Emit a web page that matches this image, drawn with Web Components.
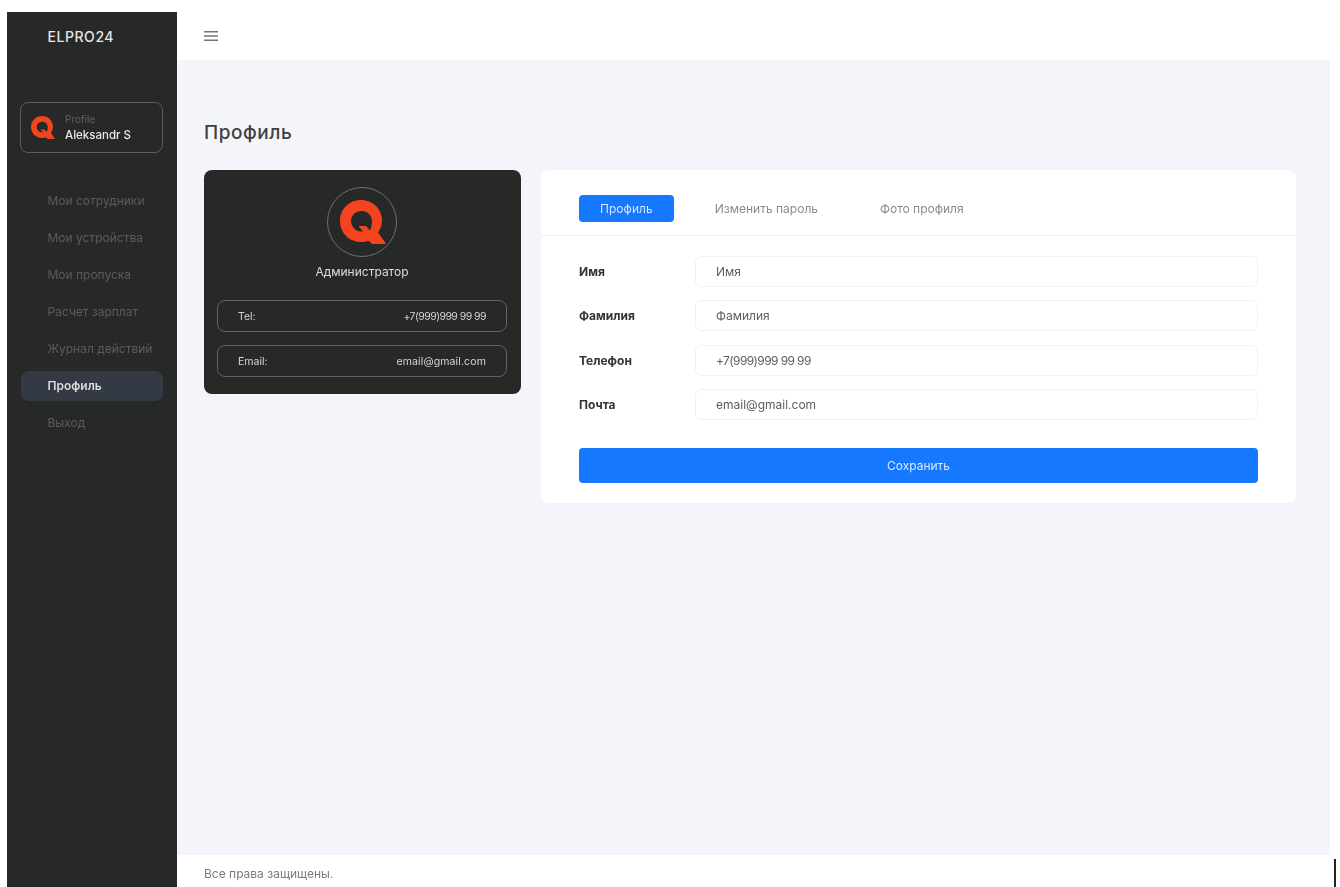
<!DOCTYPE html>
<html lang="ru"><head><meta charset="utf-8"><title>Профиль</title>
<style>
html,body{margin:0;padding:0;height:887px;overflow:hidden;background:#fff;font-family:Inter,"Noto Sans",sans-serif}
</style></head><body>
<app-shell>
  <side-bar slot="side" user-role="Profile" user-name="Aleksandr S">
    <nav-item>Мои сотрудники</nav-item>
    <nav-item>Мои устройства</nav-item>
    <nav-item>Мои пропуска</nav-item>
    <nav-item>Расчет зарплат</nav-item>
    <nav-item>Журнал действий</nav-item>
    <nav-item active>Профиль</nav-item>
    <nav-item>Выход</nav-item>
  </side-bar>
  <top-bar slot="top"></top-bar>
  <h-title>Профиль</h-title>
  <div style="display:flex;gap:20px;align-items:flex-start">
    <profile-card role-name="Администратор">
      <info-row label="Tel:"><span style="letter-spacing:-.55px">+7(999)999 99 99</span></info-row>
      <info-row label="Email:"><span style="letter-spacing:.13px">email@gmail.com</span></info-row>
    </profile-card>
    <form-card>
      <tab-item slot="tabs" active>Профиль</tab-item>
      <tab-item slot="tabs">Изменить пароль</tab-item>
      <tab-item slot="tabs">Фото профиля</tab-item>
      <form-row label="Имя">Имя</form-row>
      <form-row label="Фамилия">Фамилия</form-row>
      <form-row label="Телефон"><span style="letter-spacing:-.6px">+7(999)999 99 99</span></form-row>
      <form-row label="Почта">email@gmail.com</form-row>
    </form-card>
  </div>
  <app-footer slot="foot">Все права защищены.</app-footer>
</app-shell>
<script>
const Q=(w,h)=>`<svg width="${w}" height="${h}" viewBox="0 0 46 44" style="display:block"><path fill="#f4431f" fill-rule="evenodd" d="M21 0C33 0 42 9 42 20.5C42 25 40.5 29 38 32.5L45.5 43V44H32L29 41C26.5 41.5 24 42 21 42C9 42 0 32.5 0 21C0 9 9 0 21 0ZM21.5 11C15.5 11 11 15.5 11 21C11 26.5 15.5 31.5 21.5 31.5C22 31.5 22.5 31.5 23 31.5L18.5 26H26L30 30.5C31.2 28 32 24.5 32 21C32 15.5 27.5 11 21.5 11Z"/></svg>`;
function def(name,html){customElements.define(name,class extends HTMLElement{
  connectedCallback(){if(this.shadowRoot)return;const r=this.attachShadow({mode:'open'});r.innerHTML=typeof html==='function'?html(this):html;}
});}
def('app-shell',`<style>
:host{display:flex;height:887px;padding-top:12px;padding-left:7px;box-sizing:border-box;filter:blur(.35px)}
.side{flex:0 0 170px;display:flex}
.col{flex:0 0 1153px;display:flex;flex-direction:column;min-width:0}
main{flex:1;background:#f4f5fa;padding:60px 34px 0 27px}
.gut{flex:1;display:flex;flex-direction:column;justify-content:flex-end;padding-left:4px}
.bar{width:2px;height:28px;background:#222}
</style>
<div class="side"><slot name="side"></slot></div>
<div class="col"><slot name="top"></slot><main><slot></slot></main><slot name="foot"></slot></div>
<div class="gut"><div class="bar"></div></div>`);
def('side-bar',h=>`<style>
:host{display:flex;flex-direction:column;width:170px;background:#272929;color:#e8e8e8}
.brand{height:48px;display:flex;align-items:center;padding-left:40.5px;font-size:14px;font-weight:500;letter-spacing:.55px;color:#e6e6e6}
.prof{margin:42px 14px 0 13px;height:51px;box-sizing:border-box;border:1px solid #5c5e5e;border-radius:8px;display:flex;align-items:center;padding-left:10px;gap:10px}
.t{display:flex;flex-direction:column;gap:3px}
.r{font-size:10px;color:#5f6161;line-height:12px}
.n{font-size:11.5px;font-weight:500;color:#e8e8e8;line-height:14px}
nav{margin:32px 14px 0 14px;display:flex;flex-direction:column;gap:7.15px}
</style>
<div class="brand">ELPRO24</div>
<div class="prof">${Q(24,23)}<div class="t"><span class="r">${h.getAttribute('user-role')}</span><span class="n">${h.getAttribute('user-name')}</span></div></div>
<nav><slot></slot></nav>`);
def('nav-item',h=>`<style>
:host{display:flex;align-items:center;height:30px;padding-left:26.5px;border-radius:8px;font-size:12px;white-space:nowrap;color:#5b5d5d;${h.hasAttribute('active')?'background:#333a44;color:#dcdcdc;font-weight:600;':''}}
</style><slot></slot>`);
def('top-bar',`<style>
:host{display:flex;align-items:center;height:48px;background:#fff;padding-left:27px}
svg{display:block}
</style><svg width="14" height="10" viewBox="0 0 14 10"><path d="M0 .75H14M0 5H14M0 9.25H14" stroke="#777" stroke-width="1.3" fill="none"/></svg>`);
def('h-title',`<style>
:host{display:flex;align-items:center;height:24px;margin-bottom:26px;font-size:19px;font-weight:500;letter-spacing:.55px;color:#3f4042}
</style><slot></slot>`);
def('profile-card',h=>`<style>
:host{display:flex;flex-direction:column;align-items:center;flex:0 0 317px;height:224px;box-sizing:border-box;background:#272929;border-radius:8px;padding:17px 14px 0 13px}
.ring{width:70px;height:70px;box-sizing:border-box;border:1px solid #6e7070;border-radius:50%;display:flex;align-items:center;justify-content:center;padding-left:1px}
.role{margin-top:7px;font-size:12px;line-height:16px;color:#dcdcdc}
.rows{align-self:stretch;margin-top:20px;display:flex;flex-direction:column;gap:13px}
</style>
<div class="ring">${Q(46,44)}</div>
<div class="role">${h.getAttribute('role-name')}</div>
<div class="rows"><slot></slot></div>`);
def('info-row',h=>`<style>
:host{display:flex;justify-content:space-between;align-items:center;height:32px;box-sizing:border-box;border:1px solid #626464;border-radius:8px;padding:0 20px;font-size:10.5px;color:#d6d6d6}
</style><span>${h.getAttribute('label')}</span><span><slot></slot></span>`);
def('form-card',`<style>
:host{display:block;flex:0 0 755px;height:333px;box-sizing:border-box;background:#fff;border-radius:8px}
.tabs{height:66px;box-sizing:border-box;border-bottom:1px solid #eeeff1;padding:25px 38px 0;display:flex;align-items:flex-start}
.body{padding:20px 38px 0;display:flex;flex-direction:column;gap:13px}
.rows{display:flex;flex-direction:column;gap:13.4px}
.btn{margin-top:15px;height:35px;background:#1677ff;border-radius:4px;color:#dbe9ff;font-size:12px;display:flex;align-items:center;justify-content:center;box-sizing:border-box}
</style>
<div class="tabs"><slot name="tabs"></slot></div>
<div class="body"><div class="rows"><slot></slot></div><div class="btn">Сохранить</div></div>`);
def('tab-item',h=>`<style>
:host{display:flex;align-items:center;height:27px;box-sizing:border-box;padding:0 21px;margin-right:20px;font-size:12px;color:#8a8b8d;white-space:nowrap;border-radius:4px;${h.hasAttribute('active')?'background:#1677ff;color:#d5e6ff;letter-spacing:.05px;':''}}
</style><slot></slot>`);
def('form-row',h=>`<style>
:host{display:flex;align-items:center;height:31px;font-size:12px}
label{flex:0 0 116px;font-weight:700;color:#333}
.in{flex:1;height:31px;box-sizing:border-box;border:1px solid #f0f1f3;border-radius:6px;display:flex;align-items:center;padding-left:20px;color:#5c5d60}
</style><label>${h.getAttribute('label')}</label><div class="in"><slot></slot></div>`);
def('app-footer',`<style>
:host{display:flex;align-items:center;height:32px;background:#fff;padding:5px 0 0 27px;box-sizing:border-box;font-size:12px;color:#7a7b7d}
</style><slot></slot>`);
</script>
</body></html>
